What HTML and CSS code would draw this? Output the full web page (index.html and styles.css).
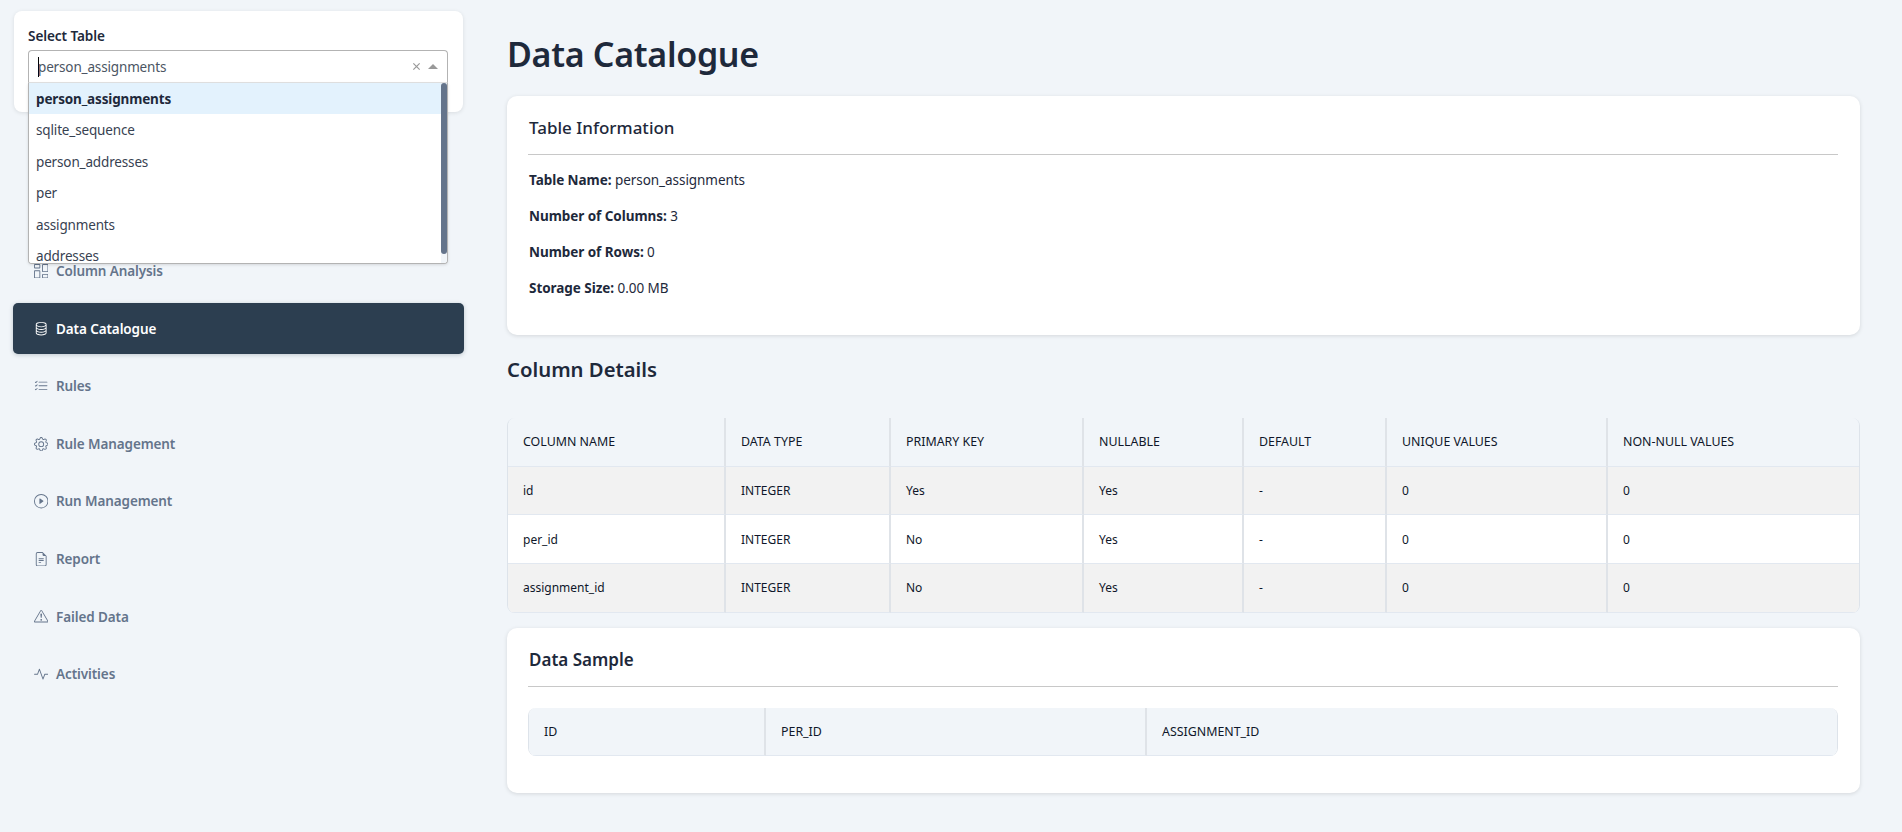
FILE: index.html
```html
<!DOCTYPE html>
<html lang="en">
<head>
  <meta charset="UTF-8" />
  <meta name="viewport" content="width=device-width, initial-scale=1" />
  <title>Data Catalogue</title>
  <link rel="stylesheet" href="styles.css">
</head>
<body>

  <aside class="sidebar">
    <div class="select-card">
      <label class="select-label">Select Table</label>
      <div class="select-box">
        <div class="select-input">
          <span class="caret"></span>
          <span class="select-value">person_assignments</span>
          <svg class="select-clear" viewBox="0 0 10 10"><path d="M1.5 1.5l7 7M8.5 1.5l-7 7" /></svg>
          <span class="select-arrow"></span>
        </div>
        <div class="select-dropdown">
          <ul class="select-menu">
            <li class="selected">person_assignments</li>
            <li>sqlite_sequence</li>
            <li>person_addresses</li>
            <li>per</li>
            <li>assignments</li>
            <li>addresses</li>
          </ul>
          <span class="menu-thumb"></span>
        </div>
      </div>
    </div>

    <nav class="nav">
      <a class="nav-item">
        <svg class="nav-icon" viewBox="0 0 16 16"><path d="M6 1v3H1V1zM1 0a1 1 0 0 0-1 1v3a1 1 0 0 0 1 1h5a1 1 0 0 0 1-1V1a1 1 0 0 0-1-1zm14 12v3h-5v-3zm-5-1a1 1 0 0 0-1 1v3a1 1 0 0 0 1 1h5a1 1 0 0 0 1-1v-3a1 1 0 0 0-1-1zM6 8v7H1V8zM1 7a1 1 0 0 0-1 1v7a1 1 0 0 0 1 1h5a1 1 0 0 0 1-1V8a1 1 0 0 0-1-1zm14-6v7h-5V1zm-5-1a1 1 0 0 0-1 1v7a1 1 0 0 0 1 1h5a1 1 0 0 0 1-1V1a1 1 0 0 0-1-1z" /></svg>
        Column Analysis
      </a>
      <a class="nav-item active">
        <svg class="nav-icon" viewBox="0 0 16 16"><path d="M4.318 2.687C5.234 2.271 6.536 2 8 2s2.766.27 3.682.687C12.644 3.125 13 3.627 13 4c0 .374-.356.875-1.318 1.313C10.766 5.729 9.464 6 8 6s-2.766-.27-3.682-.687C3.356 4.875 3 4.373 3 4c0-.374.356-.875 1.318-1.313M13 5.698V7c0 .374-.356.875-1.318 1.313C10.766 8.729 9.464 9 8 9s-2.766-.27-3.682-.687C3.356 7.875 3 7.373 3 7V5.698c.271.202.58.378.904.525C4.978 6.711 6.427 7 8 7s3.022-.289 4.096-.777A5 5 0 0 0 13 5.698M14 4c0-1.007-.875-1.755-1.904-2.223C11.022 1.289 9.573 1 8 1s-3.022.289-4.096.777C2.875 2.245 2 2.993 2 4v9c0 1.007.875 1.755 1.904 2.223C4.978 15.71 6.427 16 8 16s3.022-.289 4.096-.777C13.125 14.755 14 14.007 14 13zm-1 4.698V10c0 .374-.356.875-1.318 1.313C10.766 11.729 9.464 12 8 12s-2.766-.27-3.682-.687C3.356 10.875 3 10.373 3 10V8.698c.271.202.58.378.904.525C4.978 9.71 6.427 10 8 10s3.022-.289 4.096-.777A5 5 0 0 0 13 8.698m0 3V13c0 .374-.356.875-1.318 1.313C10.766 14.729 9.464 15 8 15s-2.766-.27-3.682-.687C3.356 13.875 3 13.373 3 13v-1.302c.271.202.58.378.904.525C4.978 12.71 6.427 13 8 13s3.022-.289 4.096-.777c.324-.147.633-.323.904-.525" /></svg>
        Data Catalogue
      </a>
      <a class="nav-item">
        <svg class="nav-icon" viewBox="0 0 16 16"><path d="M5 11.5a.5.5 0 0 1 .5-.5h9a.5.5 0 0 1 0 1h-9a.5.5 0 0 1-.5-.5m0-4a.5.5 0 0 1 .5-.5h9a.5.5 0 0 1 0 1h-9a.5.5 0 0 1-.5-.5m0-4a.5.5 0 0 1 .5-.5h9a.5.5 0 0 1 0 1h-9a.5.5 0 0 1-.5-.5M3.854 2.146a.5.5 0 0 1 0 .708l-1.5 1.5a.5.5 0 0 1-.708 0l-.5-.5a.5.5 0 1 1 .708-.708L2 3.293l1.146-1.147a.5.5 0 0 1 .708 0m0 4a.5.5 0 0 1 0 .708l-1.5 1.5a.5.5 0 0 1-.708 0l-.5-.5a.5.5 0 1 1 .708-.708L2 7.293l1.146-1.147a.5.5 0 0 1 .708 0m0 4a.5.5 0 0 1 0 .708l-1.5 1.5a.5.5 0 0 1-.708 0l-.5-.5a.5.5 0 0 1 .708-.708l.146.147 1.146-1.147a.5.5 0 0 1 .708 0" /></svg>
        Rules
      </a>
      <a class="nav-item">
        <svg class="nav-icon" viewBox="0 0 16 16"><path d="M8 4.754a3.246 3.246 0 1 0 0 6.492 3.246 3.246 0 0 0 0-6.492M5.754 8a2.246 2.246 0 1 1 4.492 0 2.246 2.246 0 0 1-4.492 0" /><path d="M9.796 1.343c-.527-1.79-3.065-1.79-3.592 0l-.094.319a.873.873 0 0 1-1.255.52l-.292-.16c-1.64-.892-3.433.902-2.54 2.541l.159.292a.873.873 0 0 1-.52 1.255l-.319.094c-1.79.527-1.79 3.065 0 3.592l.319.094a.873.873 0 0 1 .52 1.255l-.16.292c-.892 1.64.901 3.434 2.541 2.54l.292-.159a.873.873 0 0 1 1.255.52l.094.319c.527 1.79 3.065 1.79 3.592 0l.094-.319a.873.873 0 0 1 1.255-.52l.292.16c1.64.893 3.434-.902 2.54-2.541l-.159-.292a.873.873 0 0 1 .52-1.255l.319-.094c1.79-.527 1.79-3.065 0-3.592l-.319-.094a.873.873 0 0 1-.52-1.255l.16-.292c.893-1.64-.902-3.433-2.541-2.54l-.292.159a.873.873 0 0 1-1.255-.52zm-2.633.283c.246-.835 1.428-.835 1.674 0l.094.319a1.873 1.873 0 0 0 2.693 1.115l.291-.16c.764-.415 1.6.42 1.184 1.185l-.159.292a1.873 1.873 0 0 0 1.116 2.692l.318.094c.835.246.835 1.428 0 1.674l-.319.094a1.873 1.873 0 0 0-1.115 2.693l.16.291c.415.764-.42 1.6-1.185 1.184l-.291-.159a1.873 1.873 0 0 0-2.693 1.116l-.094.318c-.246.835-1.428.835-1.674 0l-.094-.319a1.873 1.873 0 0 0-2.692-1.115l-.292.16c-.764.415-1.6-.42-1.184-1.185l.159-.291A1.873 1.873 0 0 0 1.945 8.93l-.319-.094c-.835-.246-.835-1.428 0-1.674l.319-.094A1.873 1.873 0 0 0 3.06 4.377l-.16-.292c-.415-.764.42-1.6 1.185-1.184l.292.159a1.873 1.873 0 0 0 2.692-1.115z" /></svg>
        Rule Management
      </a>
      <a class="nav-item">
        <svg class="nav-icon" viewBox="0 0 16 16"><path d="M8 15A7 7 0 1 1 8 1a7 7 0 0 1 0 14m0 1A8 8 0 1 0 8 0a8 8 0 0 0 0 16" /><path d="M6.271 5.055a.5.5 0 0 1 .52.038l3.5 2.5a.5.5 0 0 1 0 .814l-3.5 2.5A.5.5 0 0 1 6 10.5v-5a.5.5 0 0 1 .271-.445" /></svg>
        Run Management
      </a>
      <a class="nav-item">
        <svg class="nav-icon" viewBox="0 0 16 16"><path d="M5.5 7a.5.5 0 0 0 0 1h5a.5.5 0 0 0 0-1zM5 9.5a.5.5 0 0 1 .5-.5h5a.5.5 0 0 1 0 1h-5a.5.5 0 0 1-.5-.5m0 2a.5.5 0 0 1 .5-.5h2a.5.5 0 0 1 0 1h-2a.5.5 0 0 1-.5-.5" /><path d="M9.5 0H4a2 2 0 0 0-2 2v12a2 2 0 0 0 2 2h8a2 2 0 0 0 2-2V4.5zm0 1v2A1.5 1.5 0 0 0 11 4.5h2V14a1 1 0 0 1-1 1H4a1 1 0 0 1-1-1V2a1 1 0 0 1 1-1z" /></svg>
        Report
      </a>
      <a class="nav-item">
        <svg class="nav-icon" viewBox="0 0 16 16"><path d="M7.938 2.016A.13.13 0 0 1 8.002 2a.13.13 0 0 1 .063.016.15.15 0 0 1 .054.057l6.857 11.667c.036.06.035.124.002.183a.2.2 0 0 1-.054.06.1.1 0 0 1-.066.017H1.146a.1.1 0 0 1-.066-.017.2.2 0 0 1-.054-.06.18.18 0 0 1 .002-.183L7.884 2.073a.15.15 0 0 1 .054-.057m1.044-.45a1.13 1.13 0 0 0-1.96 0L.165 13.233c-.457.778.091 1.767.98 1.767h13.713c.889 0 1.438-.99.98-1.767z" /><path d="M7.002 12a1 1 0 1 1 2 0 1 1 0 0 1-2 0M7.1 5.995a.905.905 0 1 1 1.8 0l-.35 3.507a.552.552 0 0 1-1.1 0z" /></svg>
        Failed Data
      </a>
      <a class="nav-item">
        <svg class="nav-icon" viewBox="0 0 16 16"><path d="M6 2a.5.5 0 0 1 .47.33L10 12.036l1.53-4.208A.5.5 0 0 1 12 7.5h3.5a.5.5 0 0 1 0 1h-3.15l-1.88 5.17a.5.5 0 0 1-.94 0L6 3.964 4.47 8.171A.5.5 0 0 1 4 8.5H.5a.5.5 0 0 1 0-1h3.15l1.88-5.17A.5.5 0 0 1 6 2" /></svg>
        Activities
      </a>
    </nav>
  </aside>

  <main class="main">
    <h1 class="page-title">Data Catalogue</h1>

    <section class="card">
      <h3 class="card-title">Table Information</h3>
      <p class="info-row"><strong>Table Name:</strong> person_assignments</p>
      <p class="info-row"><strong>Number of Columns:</strong> 3</p>
      <p class="info-row"><strong>Number of Rows:</strong> 0</p>
      <p class="info-row"><strong>Storage Size:</strong> 0.00 MB</p>
    </section>

    <h2 class="section-title">Column Details</h2>

    <div class="table-wrap">
      <table class="data-table">
        <colgroup>
          <col class="c-name"><col class="c-type"><col class="c-key"><col class="c-null"><col class="c-default"><col class="c-unique"><col>
        </colgroup>
        <thead>
          <tr>
            <th>Column Name</th><th>Data Type</th><th>Primary Key</th><th>Nullable</th><th>Default</th><th>Unique Values</th><th>Non-Null Values</th>
          </tr>
        </thead>
        <tbody>
          <tr>
            <td>id</td><td>INTEGER</td><td>Yes</td><td>Yes</td><td>-</td><td>0</td><td>0</td>
          </tr>
          <tr>
            <td>per_id</td><td>INTEGER</td><td>No</td><td>Yes</td><td>-</td><td>0</td><td>0</td>
          </tr>
          <tr>
            <td>assignment_id</td><td>INTEGER</td><td>No</td><td>Yes</td><td>-</td><td>0</td><td>0</td>
          </tr>
        </tbody>
      </table>
    </div>

    <section class="card card-sample">
      <h3 class="card-title card-title-strong">Data Sample</h3>
      <div class="table-wrap sample-wrap">
        <table class="data-table">
          <colgroup>
            <col class="s-id"><col class="s-per"><col>
          </colgroup>
          <thead>
            <tr>
              <th>id</th><th>per_id</th><th>assignment_id</th>
            </tr>
          </thead>
        </table>
      </div>
    </section>
  </main>

</body>
</html>
```

FILE: styles.css
```css
* { box-sizing: border-box; }
body { margin: 0; height: 832px; overflow: hidden; display: flex; background: #f1f5f9; color: #1e293b; font-family: "Noto Sans", Arial, sans-serif; font-size: 13.5px; }

/* sidebar */
.sidebar { width: 477px; flex-shrink: 0; padding: 11px 13px 0; }
.select-card { position: relative; z-index: 2; height: 101px; margin: 0 1px 133px; padding: 17px 15px 0 14px; background: #fff; border-radius: 8px; box-shadow: 0 1px 4px rgba(0, 0, 0, 0.1); }
.select-label { display: block; height: 22px; font-size: 13.6px; font-weight: 600; line-height: 16px; letter-spacing: -0.1px; }
.select-box { position: relative; }
.select-input { display: flex; align-items: center; height: 33px; padding: 0 9px; background: #fff; border: 1px solid #b3b3b3; border-bottom-color: #e2e2e2; border-radius: 4px 4px 0 0; }
.caret { width: 1px; height: 20px; margin-right: -1px; background: #000; }
.select-value { flex: 1; color: #4b5563; letter-spacing: -0.15px; }
.select-clear { width: 9px; height: 9px; margin-right: 7px; fill: none; stroke: #999; stroke-width: 1.3; }
.select-arrow { width: 0; height: 0; border: 5px solid transparent; border-top: 0; border-bottom-color: #999; }
.select-dropdown { position: absolute; top: 33px; left: 0; right: 0; height: 181px; overflow: hidden; background: #fff; border: 1px solid #b3b3b3; border-top: 0; border-radius: 0 0 4px 4px; box-shadow: 0 1px 3px rgba(0, 0, 0, 0.12); }
.select-menu { height: 100%; margin: 0; padding: 0 6px 0 0; overflow: hidden; list-style: none; background: linear-gradient(#f1f5f9, #f1f5f9) right / 6px 100% no-repeat; }
.select-menu li { height: 31.4px; padding: 0 7px; background: #fff; color: #374151; line-height: 32px; letter-spacing: -0.15px; }
.select-menu li.selected { background: #e3f2fd; color: #1e293b; font-weight: 700; }
.menu-thumb { position: absolute; top: 0; right: 0; width: 6px; height: 171px; background: #64748b; border-radius: 4px; }

.nav { display: flex; flex-direction: column; gap: 6.6px; }
.nav-item { display: flex; align-items: center; gap: 7.6px; height: 51px; padding: 1px 21px 0; color: #64748b; font-size: 13.5px; font-weight: 600; letter-spacing: -0.1px; border-radius: 5px; }
.nav-item.active { background: #2c3e50; color: #fff; box-shadow: 0 1px 4px rgba(44, 62, 80, 0.25); }
.nav-icon { width: 14.4px; height: 14.4px; fill: currentColor; flex-shrink: 0; }

/* main */
.main { flex: 1; min-width: 0; padding: 30px 42px 0 30px; }
.page-title { height: 48px; margin: 0 0 18px; font-size: 34px; font-weight: 600; line-height: 49px; letter-spacing: -0.3px; }
.card { height: 239px; margin-bottom: 20px; padding: 21px 22px 21px 21px; background: #fff; border-radius: 10px; box-shadow: 0 1px 4px rgba(0, 0, 0, 0.12); }
.card-title { height: 38px; margin: 0 0 15px; padding-left: 1px; font-size: 17px; font-weight: 500; line-height: 22px; border-bottom: 1px solid #c8c8c8; }
.card-title-strong { margin-bottom: 21px; }
.info-row { height: 20px; margin: 0 0 16px; padding-left: 1px; line-height: 20px; letter-spacing: -0.05px; }
.info-row strong { font-weight: 700; }
.section-title { height: 30px; margin: 0 0 33px; font-size: 20.3px; font-weight: 600; line-height: 29px; }

.table-wrap { margin-bottom: 15px; overflow: hidden; border-left: 1px solid #dde3ea; border-right: 1px solid #dde3ea; border-radius: 8px; }
.data-table { width: 100%; border-collapse: separate; border-spacing: 0; table-layout: fixed; }
.data-table th, .data-table td { height: 48.7px; padding: 0 15px; text-align: left; font-size: 12px; color: #0f172a; border-right: 2px solid #dfe3e8; border-bottom: 1px solid #e2e8f0; }
.data-table th:last-child, .data-table td:last-child { border-right: 0; }
.data-table th { font-size: 12.4px; font-weight: 400; text-transform: uppercase; background: #f1f5f9; }
.data-table tbody tr:nth-child(odd) td { background: #f2f2f2; }
.data-table tbody tr:nth-child(even) td { background: #fff; }
.c-name { width: 218px; }
.c-type { width: 165px; }
.c-key { width: 193px; }
.c-null { width: 160px; }
.c-default { width: 143px; }
.c-unique { width: 221px; }
.s-id { width: 237px; }
.s-per { width: 381px; }
.card-sample { height: 165px; margin: 0; }
.card-sample .card-title { font-weight: 600; }
.sample-wrap { margin: 0; }
```
